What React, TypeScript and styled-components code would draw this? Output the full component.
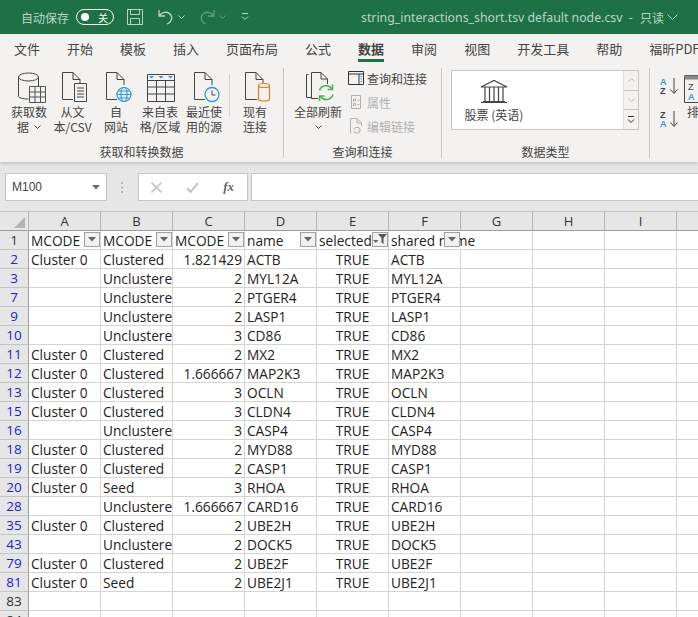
import React from "react";
import styled, { createGlobalStyle } from "styled-components";

const CJK = `"Noto Sans CJK SC", "Noto Sans", sans-serif`;
const CELL_FONT = `"Open Sans", "Noto Sans CJK SC", sans-serif`;

const GlobalStyle = createGlobalStyle`
  html, body { margin: 0; padding: 0; background: #e6e6e6; }
  * { box-sizing: border-box; }
`;

const Page = styled.div`
  width: 698px;
  height: 617px;
  overflow: hidden;
  display: flex;
  flex-direction: column;
  font-family: ${CJK};
  background: #e6e6e6;
`;

/* title bar */
const TitleBar = styled.div`
  height: 34px;
  flex: none;
  background: #1e7145;
  color: #b9d6c6;
  display: flex;
  align-items: center;
  padding-left: 21px;
  font-size: 12px;
  white-space: nowrap;
`;

const Toggle = styled.div`
  margin-left: 7px;
  width: 38px;
  height: 16px;
  border: 1px solid #fff;
  border-radius: 8px;
  display: flex;
  align-items: center;
  justify-content: space-between;
  padding: 0 5px 0 4px;
  color: #fff;
  font-size: 10px;
`;

const Knob = styled.span`
  width: 8px;
  height: 8px;
  border-radius: 50%;
  background: #fff;
`;

const QuickIcons = styled.div`
  display: flex;
  align-items: center;
  margin-left: 13px;
  width: 234px;
  flex: none;
`;

const QuickChevron = styled.span`
  margin-left: 3px;
  display: flex;
`;

const FileName = styled.span`
  font-family: "Noto Sans", sans-serif;
  font-size: 12.3px;
  width: 279px;
  flex: none;
`;

const ReadOnly = styled.span`
  display: flex;
  align-items: center;
  gap: 3px;
  font-size: 12px;
`;

/* tabs */
const TabBar = styled.div`
  height: 34px;
  flex: none;
  background: #f3f2f1;
  display: flex;
  gap: 27px;
  padding-left: 14px;
  white-space: nowrap;
`;

const Tab = styled.div<{ $active?: boolean }>`
  height: 28px;
  padding-top: 6px;
  font-size: 13px;
  line-height: 18px;
  color: #444;
  font-weight: ${(p) => (p.$active ? 700 : 400)};
  border-bottom: ${(p) => (p.$active ? "3px solid #1e7145" : "none")};
`;

/* ribbon */
const Ribbon = styled.div`
  height: 94px;
  flex: none;
  background: #f3f2f1;
  display: flex;
  box-shadow: 0 2px 3px rgba(0, 0, 0, 0.14);
  position: relative;
  overflow: hidden;
`;

const Group = styled.div<{ $width: number; $bare?: boolean }>`
  width: ${(p) => p.$width}px;
  flex: none;
  height: 90px;
  display: flex;
  flex-direction: column;
  border-right: ${(p) => (p.$bare ? "none" : "1px solid #c8c6c4")};
`;

const GroupBody = styled.div<{ $left: number }>`
  flex: 1;
  display: flex;
  padding-left: ${(p) => p.$left}px;
  min-height: 0;
`;

const GroupLabel = styled.div`
  height: 22px;
  padding-top: 8px;
  text-align: center;
  font-size: 12px;
  line-height: 16px;
  color: #444;
`;

const BigButton = styled.div<{ $width: number }>`
  width: ${(p) => p.$width}px;
  flex: none;
  display: flex;
  flex-direction: column;
  align-items: center;
  padding-top: 3px;
  font-size: 12px;
  line-height: 15px;
  color: #444;
  text-align: center;
  white-space: pre-line;
`;

const BigIcon = styled.div<{ $pad?: number }>`
  height: 32px;
  margin-bottom: 1px;
  display: flex;
  align-items: flex-end;
  padding-left: ${(p) => p.$pad ?? 3}px;
`;

const LabelLine = styled.span`
  display: flex;
  align-items: center;
  gap: 5px;
`;

const ChevronLine = styled.span`
  margin-top: 6px;
  display: flex;
`;

const RibbonSeparator = styled.div`
  width: 1px;
  height: 42px;
  margin: 6px 3px 0 3px;
  background: #d2d0ce;
  flex: none;
`;

const SmallColumn = styled.div`
  display: flex;
  flex-direction: column;
  gap: 8px;
  padding-top: 2px;
  margin-left: 5px;
`;

const SmallButton = styled.div<{ $disabled?: boolean }>`
  height: 16px;
  display: flex;
  align-items: center;
  gap: 3px;
  font-size: 12px;
  color: ${(p) => (p.$disabled ? "#b1b1b1" : "#444")};
  white-space: nowrap;
`;

const Gallery = styled.div`
  margin: 2px 0 0 9px;
  width: 188px;
  height: 60px;
  background: #fff;
  border: 1px solid #c8c6c4;
  display: flex;
  justify-content: space-between;
`;

const GalleryItem = styled.div`
  width: 84px;
  padding-top: 8px;
  display: flex;
  flex-direction: column;
  align-items: center;
  gap: 4px;
  font-size: 12px;
  line-height: 16px;
  color: #444;
  white-space: nowrap;
`;

const Scrollers = styled.div`
  width: 15px;
  display: flex;
  flex-direction: column;
  border-left: 1px solid #e1dfdd;
  background: #f3f2f1;
`;

const Scroller = styled.div<{ $last?: boolean }>`
  flex: 1;
  display: flex;
  align-items: center;
  justify-content: center;
  border-bottom: ${(p) => (p.$last ? "none" : "1px solid #c8c6c4")};
`;

const SortColumn = styled.div`
  display: flex;
  flex-direction: column;
  gap: 15px;
  padding-top: 9px;
  margin-left: 10px;
`;

/* formula bar */
const FormulaBar = styled.div`
  height: 28px;
  margin-top: 11px;
  flex: none;
  display: flex;
  padding-left: 5px;
`;

const NameBox = styled.div`
  width: 102px;
  background: #fff;
  border: 1px solid #c6c6c6;
  display: flex;
  align-items: center;
  justify-content: space-between;
  padding: 0 6px;
  font-family: "Liberation Sans", sans-serif;
  font-size: 12px;
  color: #444;
`;

const Grip = styled.div`
  width: 31px;
  display: flex;
  justify-content: center;
  align-items: center;
`;

const FormulaButtons = styled.div`
  width: 110px;
  background: #fff;
  border: 1px solid #c6c6c6;
  display: flex;
  align-items: center;
  justify-content: space-between;
  padding: 0 13px 0 12px;
`;

const FxLabel = styled.span`
  font-family: "Liberation Serif", serif;
  font-style: italic;
  font-weight: 700;
  font-size: 13px;
  color: #666;
`;

const FormulaInput = styled.div`
  flex: 1;
  margin-left: 3px;
  background: #fff;
  border: 1px solid #c6c6c6;
  border-right: none;
`;

/* sheet */
const Sheet = styled.div`
  margin-top: 10px;
  border-top: 1px solid #c8c8c8;
  flex: 1;
  display: grid;
  grid-template-columns: 29px repeat(10, 72px);
  grid-auto-rows: 19px;
  align-content: start;
  background: #fff;
  overflow: hidden;
  color: #222;
  font-family: ${CELL_FONT};
`;

const Corner = styled.div`
  background: #e6e6e6;
  height: 19px;
  border-right: 1px solid #b4b4b4;
  border-bottom: 1px solid #9e9e9e;
  display: flex;
  align-items: flex-end;
  justify-content: flex-end;
  padding: 0 3px 2px 0;
`;

const ColumnHead = styled.div`
  background: #e6e6e6;
  height: 19px;
  border-right: 1px solid #b4b4b4;
  border-bottom: 1px solid #9e9e9e;
  text-align: center;
  font-size: 13px;
  line-height: 19px;
  color: #333;
`;

const RowHead = styled.div<{ $filtered: boolean }>`
  background: #e6e6e6;
  border-right: 1px solid #9e9e9e;
  border-bottom: 1px solid #c4c4c4;
  text-align: center;
  font-size: 13.5px;
  line-height: 19px;
  color: ${(p) => (p.$filtered ? "#1c1cd8" : "#333")};
`;

const Cell = styled.div<{ $align?: string; $spill?: boolean }>`
  position: relative;
  border-right: 1px solid #d4d4d4;
  border-bottom: 1px solid #d4d4d4;
  font-size: 13.7px;
  line-height: 19px;
  white-space: nowrap;
  padding: 0 2px;
  text-align: ${(p) => p.$align || "left"};
  overflow: ${(p) => (p.$spill ? "visible" : "hidden")};
  ${(p) => (p.$spill ? "border-right-color: transparent;" : "")}
`;

const HeaderText = styled.div<{ $width?: number }>`
  width: ${(p) => p.$width ?? 50}px;
  overflow: hidden;
`;

const FilterButton = styled.span`
  position: absolute;
  right: 0;
  top: 1px;
  width: 16px;
  height: 15px;
  background: #f1f1f1;
  border: 1px solid #a0a0a0;
  display: flex;
  align-items: center;
  justify-content: center;
`;

const Sv = styled.svg`
  display: block;
  flex: none;
`;

const UndoIcon = styled(Sv)`
  margin-left: 14px;
`;

const RedoIcon = styled(Sv)`
  margin-left: 13px;
`;

const CustomizeIcon = styled(Sv)`
  margin-left: 15px;
`;

/* icons */
const ink = "#444";

const DbIcon = () => (
  <Sv width="28" height="31" viewBox="0 0 28 31" fill="none" stroke={ink}>
    <path d="M.5 5V24c0 1.800 3.500 3 10 3M20.500 5v9" />
    <ellipse cx="10.500" cy="5" rx="10" ry="4" />
    <path d="M11.500 14.500h16v16h-16zM11.500 20h16M11.500 25h16M17 14.500v16M22.500 14.500v16" stroke="#555" />
  </Sv>
);

const TextDocIcon = () => (
  <Sv width="28" height="32" viewBox="0 0 28 32" fill="none" stroke={ink}>
    <path d="M2.500 28.500V1.500H13L20 8.500V12M13 1.500V8.500H20M2.500 28.500H13" />
    <path d="M14.500 12.500h12v18h-12zM17 17h7M17 20h7M17 23h7M17 26h7" fill="#f3f2f1" />
  </Sv>
);

const WebDocIcon = () => (
  <Sv width="28" height="32" viewBox="0 0 28 32" fill="none" stroke={ink}>
    <path d="M2.500 28.500V1.500H13L20 8.500V14M13 1.500V8.500H20M2.500 28.500H13" />
    <g stroke="#2f97dc" strokeWidth="1.2">
      <circle cx="20" cy="23.500" r="7" fill="#f3f2f1" />
      <ellipse cx="20" cy="23.500" rx="3" ry="7" />
      <path d="M13 23.500h14M14.200 20h11.600M14.200 27h11.600" />
    </g>
  </Sv>
);

const TableIcon = () => (
  <Sv width="30" height="30" viewBox="0 0 30 30" fill="none">
    <path d="M1.500 1.500h27v27h-27zM1.500 7.500h27M1.500 14h27M1.500 21h27M10.500 7.500v21M19.500 7.500v21" stroke={ink} />
    <path d="M3 3h5l-2.500 2.500zM12.500 3h5L15 5.500zM22 3h5l-2.500 2.500z" fill="#2f97dc" />
  </Sv>
);

const ClockDocIcon = () => (
  <Sv width="28" height="32" viewBox="0 0 28 32" fill="none" stroke={ink}>
    <path d="M2.500 28.500V1.500H13L20 8.500V14M13 1.500V8.500H20M2.500 28.500H13" />
    <circle cx="20" cy="23.500" r="7" fill="#f3f2f1" stroke="#2f97dc" strokeWidth="1.3" />
    <path d="M20 19.500v4.500h3.500" stroke="#444" />
  </Sv>
);

const LinkDocIcon = () => (
  <Sv width="28" height="32" viewBox="0 0 28 32" fill="none" stroke={ink}>
    <path d="M2.500 28.500V1.500H13L20 8.500V12M13 1.500V8.500H20M2.500 28.500H14" />
    <path d="M15.500 14.500V28c0 1.200 2.500 2 5.500 2s5.500-.8 5.500-2V14.500" stroke="#e87d1e" strokeWidth="1.2" fill="#f3f2f1" />
    <ellipse cx="21" cy="14.500" rx="5.500" ry="2" stroke="#e87d1e" strokeWidth="1.2" fill="#f3f2f1" />
  </Sv>
);

const RefreshIcon = () => (
  <Sv width="30" height="32" viewBox="0 0 30 32" fill="none" stroke={ink}>
    <path d="M3.500 3.500h-2v23h5" />
    <path d="M6.500 27.500V1.500H16L22.500 8V13M16 1.500V8H22.500M6.500 27.500H13" />
    <path d="M14.500 19.500a7 7 0 0 1 12.500-1.500M28 23.500a7 7 0 0 1-12.500 2" stroke="#4caf50" strokeWidth="1.500" />
    <path d="M27.500 13.500V18.500H22.500M14.500 30V25H19.500" stroke="#4caf50" strokeWidth="1.500" />
  </Sv>
);

const PanelIcon = () => (
  <Sv width="16" height="14" viewBox="0 0 16 14" fill="none">
    <path d="M.5.500h15v13H.5zM.5 3h15M11 3v10.500" stroke="#333" />
    <path d="M12.500 5.500h1.500M12.500 8h1.500M12.500 10.500h1.500" stroke="#2f97dc" />
  </Sv>
);

const PropsIcon = () => (
  <Sv width="16" height="16" viewBox="0 0 16 16" fill="none" stroke="#b1b1b1">
    <path d="M3.500 1.500h9v13h-9zM5.500 5h2v2h-2zM5.500 9.500h2v2h-2zM9.500 6h2M9.500 10.500h2" />
  </Sv>
);

const EditLinkIcon = () => (
  <Sv width="16" height="16" viewBox="0 0 16 16" fill="none" stroke="#b1b1b1">
    <path d="M2.500 15.500V.5H9L13.500 5V8M9 .5V5h4.500" />
    <path d="M6 11.500a2 2 0 0 1 2-2h2a2 2 0 0 1 0 4M12 12.500a2 2 0 0 1-2 2.500H8a2 2 0 0 1-2-2" />
  </Sv>
);

const BankIcon = () => (
  <Sv width="28" height="24" viewBox="0 0 28 24" fill="none" stroke={ink} strokeWidth="1.2">
    <path d="M1 8L14 1.500 27 8zM1 8h26M3 22.500h22M1 23.500h26M5 8.500V22M9.500 8.500V22M14 8.500V22M18.500 8.500V22M23 8.500V22" />
  </Sv>
);

const Chevron = ({ color = "#444" }: { color?: string }) => (
  <Sv width="7" height="4" viewBox="0 0 7 4" fill="none">
    <path d="M.5.500l3 3 3-3" stroke={color} />
  </Sv>
);

const SortIcon = ({ down }: { down?: boolean }) => (
  <Sv width="19" height="18" viewBox="0 0 19 18" fill="none">
    <text x="0" y="8" fontFamily="Liberation Sans" fontSize="9" fontWeight="700" fill={down ? "#444" : "#2f97dc"}>
      {down ? "Z" : "A"}
    </text>
    <text x="0" y="17" fontFamily="Liberation Sans" fontSize="9" fontWeight="700" fill={down ? "#2f97dc" : "#444"}>
      {down ? "A" : "Z"}
    </text>
    <path d="M14 1v15M10.500 12.500L14 16.500l3.500-4" stroke="#444" />
  </Sv>
);

const ArrowGlyph = () => (
  <Sv width="8" height="5" viewBox="0 0 8 5">
    <path d="M0 0h8L4 4.500z" fill="#666" />
  </Sv>
);

const FunnelGlyph = () => (
  <Sv width="14" height="13" viewBox="0 0 14 13">
    <path d="M5 1h9L10.500 5v6L8.500 9.500V5z" fill="#555" />
    <path d="M0 7h5.500L2.750 10z" fill="#666" />
  </Sv>
);

const columns = ["A", "B", "C", "D", "E", "F", "G", "H", "I", "J"];

const rows: [number, string, string, string, string][] = [
  [2, "Cluster 0", "Clustered", "1.821429", "ACTB"],
  [3, "", "Unclustered", "2", "MYL12A"],
  [7, "", "Unclustered", "2", "PTGER4"],
  [9, "", "Unclustered", "2", "LASP1"],
  [10, "", "Unclustered", "3", "CD86"],
  [11, "Cluster 0", "Clustered", "2", "MX2"],
  [12, "Cluster 0", "Clustered", "1.666667", "MAP2K3"],
  [13, "Cluster 0", "Clustered", "3", "OCLN"],
  [15, "Cluster 0", "Clustered", "3", "CLDN4"],
  [16, "", "Unclustered", "3", "CASP4"],
  [18, "Cluster 0", "Clustered", "2", "MYD88"],
  [19, "Cluster 0", "Clustered", "2", "CASP1"],
  [20, "Cluster 0", "Seed", "3", "RHOA"],
  [28, "", "Unclustered", "1.666667", "CARD16"],
  [35, "Cluster 0", "Clustered", "2", "UBE2H"],
  [43, "", "Unclustered", "2", "DOCK5"],
  [79, "Cluster 0", "Clustered", "2", "UBE2F"],
  [81, "Cluster 0", "Seed", "2", "UBE2J1"],
];

const tabs = ["文件", "开始", "模板", "插入", "页面布局", "公式", "数据", "审阅", "视图", "开发工具", "帮助", "福昕PDF"];

const blanks = (count: number, prefix: string) =>
  Array.from({ length: count }, (_, i) => <Cell key={`${prefix}-${i}`} />);

export default function App() {
  return (
    <Page>
      <GlobalStyle />
      <TitleBar>
        自动保存
        <Toggle>
          <Knob />关
        </Toggle>
        <QuickIcons>
          <Sv width="16" height="16" viewBox="0 0 16 16" fill="none" stroke="#b9d6c6">
            <path d="M.5.500h15v15H.5zM3.500.5v5h9v-5M3.500 15.500v-6h9v6" />
          </Sv>
          <UndoIcon width="18" height="16" viewBox="0 0 18 16" fill="none" stroke="#b9d6c6" strokeWidth="1.3">
            <path d="M2 1v6h6M2 7c3-4 8-5 11-2s2 8-3 10" />
          </UndoIcon>
          <QuickChevron>
            <Chevron color="#b9d6c6" />
          </QuickChevron>
          <RedoIcon width="18" height="16" viewBox="0 0 18 16" fill="none" stroke="#5f9e7e" strokeWidth="1.3">
            <path d="M16 1v6h-6M16 7c-3-4-8-5-11-2s-2 8 3 10" />
          </RedoIcon>
          <QuickChevron>
            <Chevron color="#5f9e7e" />
          </QuickChevron>
          <CustomizeIcon width="8" height="8" viewBox="0 0 8 8" fill="none" stroke="#b9d6c6">
            <path d="M1 .5h6M1 3.500l3 3 3-3" />
          </CustomizeIcon>
        </QuickIcons>
        <FileName>string_interactions_short.tsv default node.csv&nbsp; -</FileName>
        <ReadOnly>
          只读
          <Sv width="11" height="6" viewBox="0 0 11 6" fill="none" stroke="#b9d6c6">
            <path d="M.5.500l5 5 5-5" />
          </Sv>
        </ReadOnly>
      </TitleBar>

      <TabBar>
        {tabs.map((tab) => (
          <Tab key={tab} $active={tab === "数据"}>
            {tab}
          </Tab>
        ))}
      </TabBar>

      <Ribbon>
        <Group $width={284}>
          <GroupBody $left={7}>
            <BigButton $width={44}>
              <BigIcon $pad={6}><DbIcon /></BigIcon>
              <span>获取数</span>
              <LabelLine>据<Chevron /></LabelLine>
            </BigButton>
            <BigButton $width={43}>
              <BigIcon><TextDocIcon /></BigIcon>
              {"从文\n本/CSV"}
            </BigButton>
            <BigButton $width={44}>
              <BigIcon><WebDocIcon /></BigIcon>
              {"自\n网站"}
            </BigButton>
            <BigButton $width={44}>
              <BigIcon $pad={1}><TableIcon /></BigIcon>
              {"来自表\n格/区域"}
            </BigButton>
            <BigButton $width={44}>
              <BigIcon><ClockDocIcon /></BigIcon>
              {"最近使\n用的源"}
            </BigButton>
            <RibbonSeparator />
            <BigButton $width={44}>
              <BigIcon><LinkDocIcon /></BigIcon>
              {"现有\n连接"}
            </BigButton>
          </GroupBody>
          <GroupLabel>获取和转换数据</GroupLabel>
        </Group>

        <Group $width={158}>
          <GroupBody $left={9}>
            <BigButton $width={50}>
              <BigIcon><RefreshIcon /></BigIcon>
              全部刷新
              <ChevronLine>
                <Chevron />
              </ChevronLine>
            </BigButton>
            <SmallColumn>
              <SmallButton><PanelIcon />查询和连接</SmallButton>
              <SmallButton $disabled><PropsIcon />属性</SmallButton>
              <SmallButton $disabled><EditLinkIcon />编辑链接</SmallButton>
            </SmallColumn>
          </GroupBody>
          <GroupLabel>查询和连接</GroupLabel>
        </Group>

        <Group $width={208}>
          <GroupBody $left={0}>
            <Gallery>
              <GalleryItem>
                <BankIcon />
                股票 (英语)
              </GalleryItem>
              <Scrollers>
                <Scroller>
                  <Sv width="7" height="4" viewBox="0 0 7 4" fill="none">
                    <path d="M.5 3.500l3-3 3 3" stroke="#bbb" />
                  </Sv>
                </Scroller>
                <Scroller>
                  <Chevron color="#bbb" />
                </Scroller>
                <Scroller $last>
                  <Sv width="8" height="8" viewBox="0 0 8 8" fill="none" stroke="#333">
                    <path d="M1 .5h6M1 3.500l3 3 3-3" />
                  </Sv>
                </Scroller>
              </Scrollers>
            </Gallery>
          </GroupBody>
          <GroupLabel>数据类型</GroupLabel>
        </Group>

        <Group $width={60} $bare>
          <GroupBody $left={0}>
            <SortColumn>
              <SortIcon />
              <SortIcon down />
            </SortColumn>
            <BigButton $width={28}>
              <BigIcon>
                <Sv width="22" height="28" viewBox="0 0 22 28" fill="none">
                  <path d="M.5.500h21v27H.500z" stroke="#444" />
                  <path d="M.5.500h21v4H.500z" fill="#888" />
                  <text x="4" y="15" fontFamily="Liberation Sans" fontSize="9" fill="#444">Z</text>
                  <text x="4" y="25" fontFamily="Liberation Sans" fontSize="9" fontWeight="700" fill="#2f97dc">A</text>
                </Sv>
              </BigIcon>
              排
            </BigButton>
          </GroupBody>
        </Group>
      </Ribbon>

      <FormulaBar>
        <NameBox>
          M100
          <ArrowGlyph />
        </NameBox>
        <Grip>
          <Sv width="3" height="11" viewBox="0 0 3 11">
            <path d="M0 0h2v2H0zM0 4.500h2v2H0zM0 9h2v2H0z" fill="#b5b5b5" />
          </Sv>
        </Grip>
        <FormulaButtons>
          <Sv width="11" height="11" viewBox="0 0 11 11" fill="none" stroke="#c4c4c4" strokeWidth="1.6">
            <path d="M.5.500l10 10M10.500.5l-10 10" />
          </Sv>
          <Sv width="13" height="11" viewBox="0 0 13 11" fill="none" stroke="#c4c4c4" strokeWidth="2">
            <path d="M1 6l3.500 4L12 1" />
          </Sv>
          <FxLabel>fx</FxLabel>
        </FormulaButtons>
        <FormulaInput />
      </FormulaBar>

      <Sheet>
        <Corner>
          <Sv width="11" height="11" viewBox="0 0 11 11">
            <path d="M11 0v11H0z" fill="#b4b4b4" />
          </Sv>
        </Corner>
        {columns.map((col) => (
          <ColumnHead key={col}>{col}</ColumnHead>
        ))}

        <RowHead $filtered={false}>1</RowHead>
        <Cell>
          <HeaderText>MCODE</HeaderText>
          <FilterButton><ArrowGlyph /></FilterButton>
        </Cell>
        <Cell>
          <HeaderText>MCODE</HeaderText>
          <FilterButton><ArrowGlyph /></FilterButton>
        </Cell>
        <Cell>
          <HeaderText>MCODE</HeaderText>
          <FilterButton><ArrowGlyph /></FilterButton>
        </Cell>
        <Cell>
          name
          <FilterButton><ArrowGlyph /></FilterButton>
        </Cell>
        <Cell>
          <HeaderText $width={53}>selected</HeaderText>
          <FilterButton><FunnelGlyph /></FilterButton>
        </Cell>
        <Cell $spill>
          shared name
          <FilterButton><ArrowGlyph /></FilterButton>
        </Cell>
        {blanks(4, "head")}

        {rows.map(([num, cluster, status, score, name]) => (
          <React.Fragment key={num}>
            <RowHead $filtered>{num}</RowHead>
            <Cell>{cluster}</Cell>
            <Cell>{status}</Cell>
            <Cell $align="right">{score}</Cell>
            <Cell>{name}</Cell>
            <Cell $align="center">TRUE</Cell>
            <Cell>{name}</Cell>
            {blanks(4, `r${num}`)}
          </React.Fragment>
        ))}

        <RowHead $filtered={false}>83</RowHead>
        {blanks(10, "r83")}
        <RowHead $filtered={false}>84</RowHead>
        {blanks(10, "r84")}
      </Sheet>
    </Page>
  );
}
